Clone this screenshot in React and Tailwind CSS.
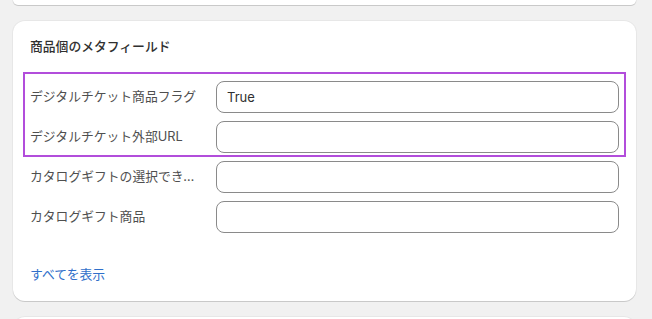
// App.jsx — metafields card

import React from "react";

const rows = [
  { label: "デジタルチケット商品フラグ", value: "True" },
  { label: "デジタルチケット外部URL", value: "" },
  { label: "カタログギフトの選択できる商品", value: "" },
  { label: "カタログギフト商品", value: "" },
];

const Row = ({ label, value }) => (
  <div className="grid grid-cols-[170px_1fr] gap-x-4 items-center">
    <div className="truncate text-[12.8px] leading-5 text-[#4f4f4f]">{label}</div>
    <input
      readOnly
      value={value}
      className="h-8 w-full rounded-lg border border-[#8a8a8a] bg-white px-[10px] text-[13px] text-[#303030] outline-none"
    />
  </div>
);

export default function App() {
  return (
    <div
      className="h-[319px] overflow-hidden bg-[#f1f1f1] pl-[13px] pr-4 flex flex-col gap-4"
      style={{ fontFamily: 'Inter, "Noto Sans CJK JP", sans-serif' }}
    >
      {/* previous card (cut off at top) */}
      <div className="h-[5px] shrink-0 rounded-b-xl bg-white shadow-[0_1px_0_0_rgba(0,0,0,0.13),0_0_0_1px_rgba(0,0,0,0.04)]" />

      {/* metafields card */}
      <div className="shrink-0 rounded-xl bg-white px-[17px] pt-4 pb-4 shadow-[0_1px_0_0_rgba(0,0,0,0.13),0_0_0_1px_rgba(0,0,0,0.04)]">
        <h2 className="text-[12.8px] leading-5 font-medium text-[#303030]">商品個のメタフィールド</h2>

        <div className="relative mt-6 flex flex-col gap-2">
          {rows.map((r) => (
            <Row key={r.label} label={r.label} value={r.value} />
          ))}
          {/* highlight around the first two rows */}
          <div className="pointer-events-none absolute -left-[7px] -right-[7px] -top-[9px] h-[85px] border-2 border-[#b24ddb]" />
        </div>

        <a href="#" className="mt-8 block text-[12.8px] leading-5 text-[#2f6fca]">すべてを表示</a>
      </div>

      {/* next card (cut off at bottom) */}
      <div className="h-20 shrink-0 rounded-t-xl bg-white shadow-[0_0_0_1px_rgba(0,0,0,0.04)]" />
    </div>
  );
}
